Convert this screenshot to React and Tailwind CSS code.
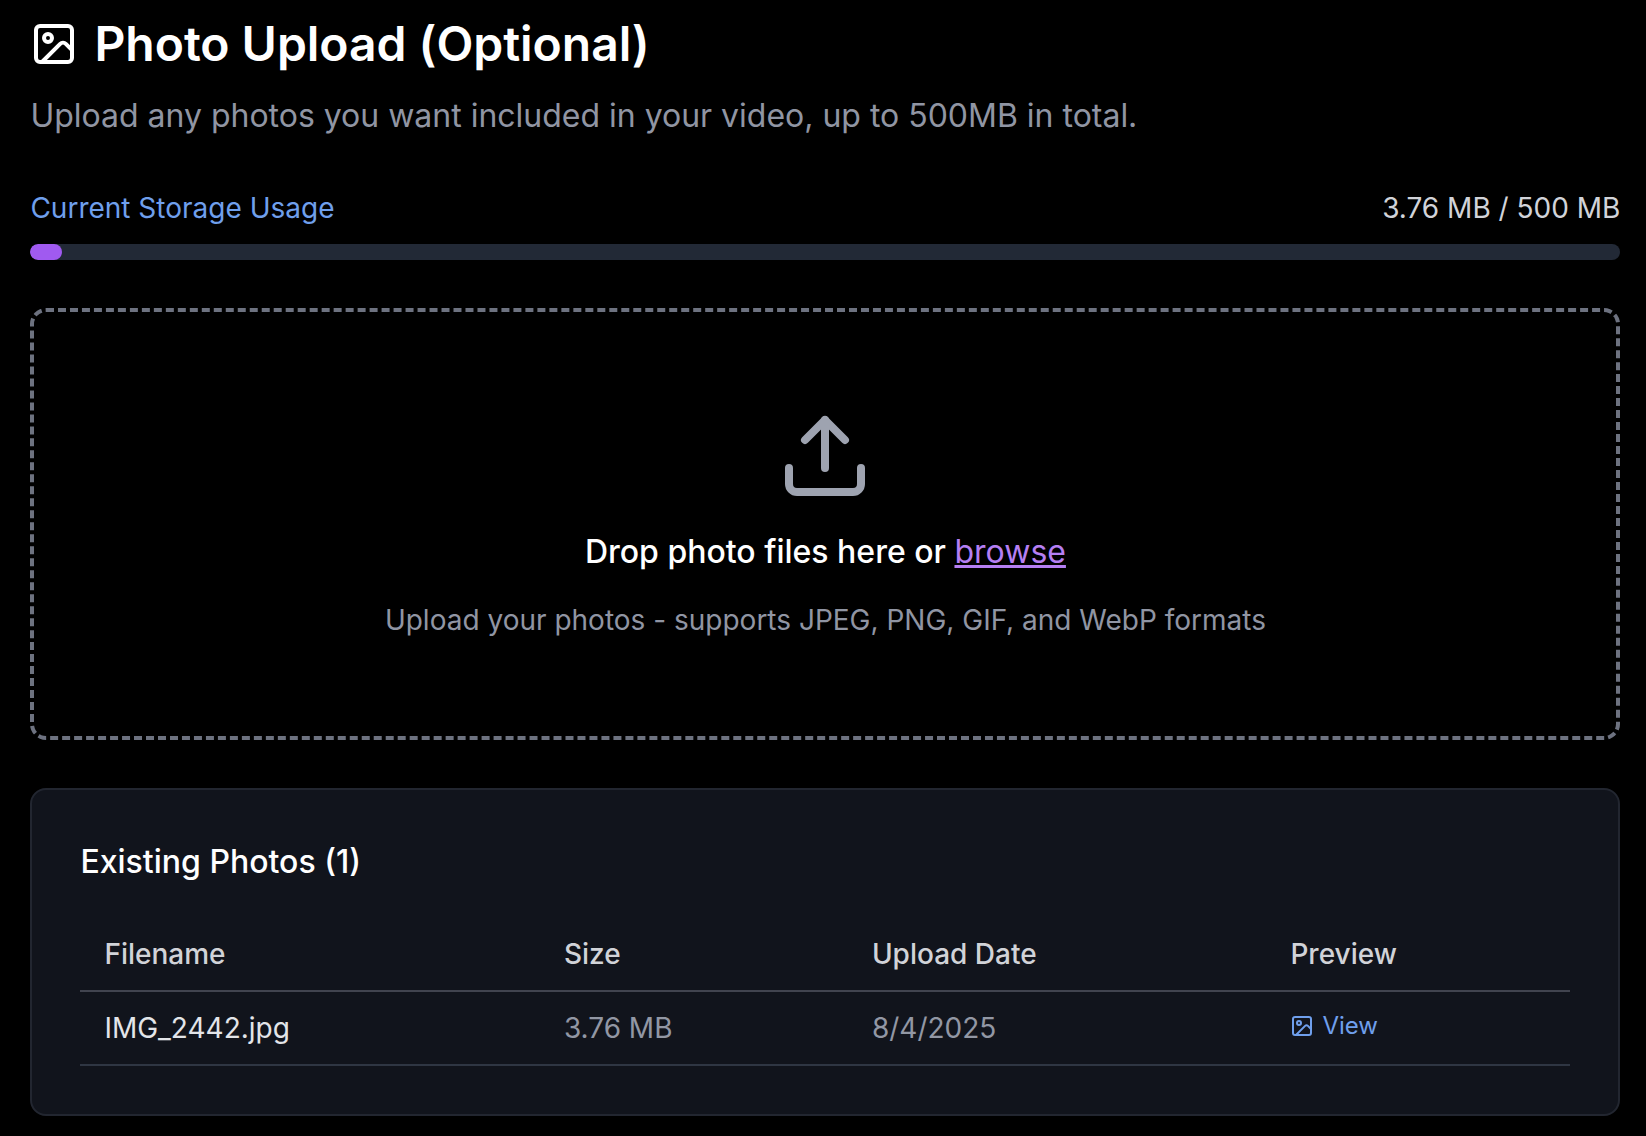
import React from "react";
import { Image, Upload } from "lucide-react";

const columns = ["Filename", "Size", "Upload Date", "Preview"];
const photos = [{ name: "IMG_2442.jpg", size: "3.76 MB", date: "8/4/2025" }];

export default function App() {
  return (
    <main className="h-[1136px] w-[1646px] overflow-hidden bg-black pl-[30.4px] pr-[25.6px] pt-5 font-['Inter',sans-serif] [font-variation-settings:'opsz'_14] text-white">
      <h2 className="flex h-12 items-center gap-4 text-[48px] leading-[48px] font-semibold tracking-[-0.03px]">
        <Image size={48} strokeWidth={2} />
        Photo Upload (Optional)
      </h2>
      <p className="mt-6 text-[32px] leading-[48px] tracking-[-0.01px] text-[#9095a3]">
        Upload any photos you want included in your video, up to 500MB in total.
      </p>

      <div className="mt-12 flex justify-between text-[28px] leading-10">
        <span className="text-[#6f9fec]">Current Storage Usage</span>
        <span className="text-[#d1d3d9]">3.76 MB / 500 MB</span>
      </div>
      <div className="mt-4 h-4 overflow-hidden rounded-full bg-[#222936]">
        <div className="h-full w-8 rounded-full bg-[#a05af0]" />
      </div>

      <section className="mt-12 flex h-[432px] flex-col items-center rounded-2xl border-4 border-dashed border-[#6d7280] pt-24">
        <Upload size={96} strokeWidth={2} className="text-[#9ea3b0]" />
        <p className="mt-6 text-[32px] leading-[48px] font-medium">
          Drop photo files here or{" "}
          <button className="font-normal text-[#b57ff3] underline">browse</button>
        </p>
        <p className="mt-6 text-[28px] leading-10 text-[#9095a3]">
          Upload your photos - supports JPEG, PNG, GIF, and WebP formats
        </p>
      </section>

      <section className="mt-12 h-[328px] rounded-2xl border-2 border-[#222630] bg-[#11141c] p-12">
        <h3 className="text-[32px] leading-[48px] font-medium">Existing Photos (1)</h3>
        <div className="mt-8 text-[28px] leading-10">
          <div className="grid h-[74px] grid-cols-[459.5px_308px_418.5px_1fr] items-center border-b-2 border-[#41444f] font-medium text-[#d1d3d8]">
            {columns.map((column) => (
              <span key={column} className="pl-6">{column}</span>
            ))}
          </div>
          {photos.map((photo) => (
            <div
              key={photo.name}
              className="grid h-[74px] grid-cols-[459.5px_308px_418.5px_1fr] items-center border-b-2 border-[#2f3643] text-[#9297a4]"
            >
              <span className="pl-6 text-[#e3e5e9]">{photo.name}</span>
              <span className="pl-6">{photo.size}</span>
              <span className="pl-6">{photo.date}</span>
              <button className="mb-1 ml-6 flex items-center gap-2 text-2xl leading-8 text-[#6f9fec]">
                <Image size={24} strokeWidth={2} />
                View
              </button>
            </div>
          ))}
        </div>
      </section>
    </main>
  );
}
